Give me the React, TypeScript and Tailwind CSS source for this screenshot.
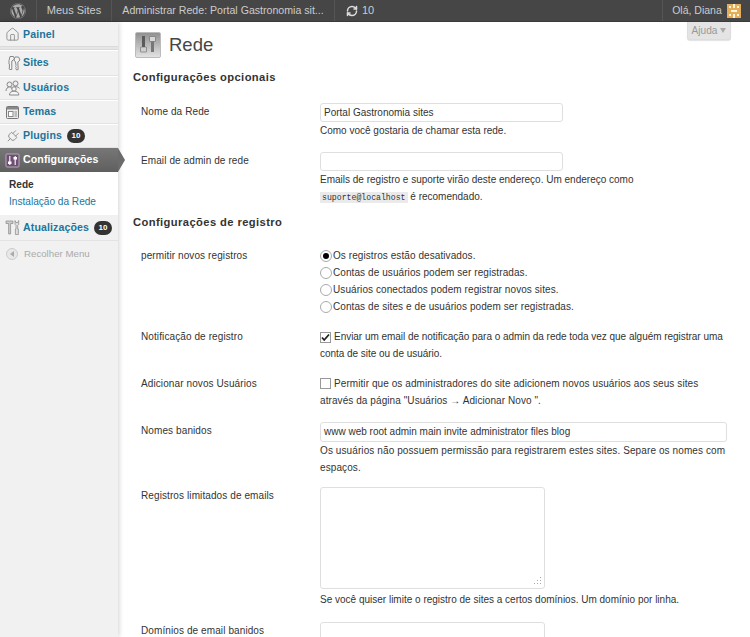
import type { ReactNode } from 'react'
import { FaWordpress } from 'react-icons/fa'
import { Home, Plug, RefreshCw } from 'lucide-react'

function KeysIcon() {
  return (
    <svg width="16" height="16" viewBox="0 0 16 16" fill="none" stroke="#888" strokeWidth="1">
      <path d="M5 1.500h3.500l1 2.500L6.800 6v8.500H4.600L4 13l.8-1L4 11l.8-1-.8-1V5.500z" fill="#f4f4f4" />
      <path d="M10 2h3.500l1.500 3-2.200 2 .4 7.500-1.600.5-.8-1.500.5-1-.7-1 .5-1-.6-3.500L9 5z" fill="#f4f4f4" />
    </svg>
  )
}

function UsersIcon() {
  return (
    <svg width="16" height="16" viewBox="0 0 16 16" fill="#eee" stroke="#888" strokeWidth="1">
      <circle cx="4.500" cy="4.500" r="2.500" />
      <circle cx="10.500" cy="3.500" r="2.500" />
      <path d="M1 11c0-2.500 1.500-4 3.500-4S7 8 7 9" />
      <path d="M8 7.500c1-1 5-1.500 6.500 1" fill="none" />
      <circle cx="9" cy="9" r="2.200" fill="#f6f6f6" />
      <path d="M4.500 15c0-2.500 1.500-3.800 4.500-3.800s4.800 1.300 4.800 3.800z" fill="#f6f6f6" />
    </svg>
  )
}

function ThemesIcon() {
  return (
    <svg width="15" height="15" viewBox="0 0 15 15" fill="none">
      <rect x="1.500" y="1.500" width="12" height="12" rx="1" fill="#ececec" stroke="#777" />
      <rect x="2" y="2" width="11" height="2.500" fill="#888" />
      <rect x="3.500" y="6.500" width="4.500" height="5" fill="#fff" stroke="#888" />
      <rect x="9.500" y="6" width="2.500" height="6" fill="#bbb" />
    </svg>
  )
}

function SettingsIcon() {
  return (
    <svg width="15" height="15" viewBox="0 0 15 15">
      <rect x="1" y="1" width="13" height="13" rx="1" fill="#6d4f72" stroke="#b9a8bc" />
      <rect x="4" y="3" width="1.500" height="9" fill="#d9d0da" />
      <rect x="9.500" y="3" width="1.500" height="9" fill="#d9d0da" />
      <rect x="3" y="8.500" width="3.500" height="2.500" fill="#fff" />
      <rect x="8.500" y="4" width="3.500" height="2.500" fill="#fff" />
    </svg>
  )
}

function ToolsIcon() {
  return (
    <svg width="16" height="17" viewBox="0 0 16 17" fill="none">
      <path d="M1 2h7v2.500H5.600V15H3.600V4.500H1z" fill="#ccc" stroke="#888" strokeWidth="0.700" />
      <path d="M10 1.500v4l1 1V10h-.6v5.500h3V10h-.7V6.500l1-1v-4l-.8 2h-2z" fill="#ddd" stroke="#888" strokeWidth="0.700" />
    </svg>
  )
}

function PageIcon() {
  return (
    <svg width="26" height="26" viewBox="0 0 26 26">
      <defs>
        <linearGradient id="pageBox" x1="0" y1="0" x2="0" y2="1">
          <stop offset="0" stopColor="#8f8f8f" />
          <stop offset="1" stopColor="#e4e4e4" />
        </linearGradient>
      </defs>
      <rect x="0.500" y="0.500" width="25" height="25" rx="1.500" fill="url(#pageBox)" stroke="#bbb" />
      <rect x="7" y="4" width="3" height="16" fill="#5a5a5a" />
      <rect x="16" y="5" width="3" height="15" fill="#777" />
      <rect x="5.500" y="15" width="6" height="5" rx="0.500" fill="#cfcfcf" stroke="#666" strokeWidth="0.600" />
      <rect x="14.500" y="4.500" width="6" height="5" rx="0.500" fill="#d8d8d8" stroke="#666" strokeWidth="0.600" />
    </svg>
  )
}

function Avatar() {
  return (
    <svg width="14" height="14" viewBox="0 0 7 7" shapeRendering="crispEdges">
      <rect width="7" height="7" fill="#e3ad5c" />
      <path d="M1 1h1v1H1zM3 0h1v2H3zM5 1h1v1H5zM2 3h3v1H2zM1 5h1v1H1zM3 5h1v2H3zM5 5h1v1H5z" fill="#fff3d8" />
    </svg>
  )
}

function Badge() {
  return (
    <span className="ml-[5px] inline-flex h-[14px] w-[18px] items-center justify-center rounded-full bg-[#333] font-bold text-[8px] text-white">
      10
    </span>
  )
}

function MenuItem({ icon, label, badge, h = 'h-[24px]' }: { icon: ReactNode; label: string; badge?: boolean; h?: string }) {
  return (
    <div className={`flex items-center border-b border-b-[#e3e3e3] border-t border-t-white pl-[5px] ${h}`}>
      <span className="flex w-[18px] justify-start">{icon}</span>
      <span className="font-bold text-[10.600px] tracking-[0.100px] text-[#21759b]">{label}</span>
      {badge && <Badge />}
    </div>
  )
}

function Sidebar() {
  return (
    <aside className="relative z-10 w-[118px] shrink-0 bg-[#f1f1f1] shadow-[1px_0_5px_rgba(0,0,0,0.18)]">
      <div className="flex h-[24px] items-center pl-[5px] pt-[1px]">
        <span className="flex w-[18px] justify-start"><Home className="h-[15px] w-[15px] text-[#888]" strokeWidth={1.400} /></span>
        <span className="font-bold text-[10.600px] tracking-[0.100px] text-[#21759b]">Painel</span>
      </div>
      <div className="h-[4px] border-y border-[#dadada] bg-[#e6e6e6]" />
      <MenuItem icon={<KeysIcon />} label="Sites" h="h-[26px] pb-[1px]" />
      <MenuItem icon={<UsersIcon />} label="Usuários" />
      <MenuItem icon={<ThemesIcon />} label="Temas" />
      <MenuItem icon={<Plug className="h-[15px] w-[15px] rotate-45 text-[#888]" strokeWidth={1.400} />} label="Plugins" badge />
      <div className="relative flex h-[24px] items-center bg-gradient-to-b from-[#777] to-[#5f5f5f] pl-[5px]">
        <span className="flex w-[18px] justify-start"><SettingsIcon /></span>
        <span className="font-bold text-[10.600px] tracking-[0.100px] text-white">Configurações</span>
        <span className="absolute left-[118px] top-0 h-0 w-0 border-y-[12px] border-l-[7px] border-y-transparent border-l-[#6b6b6b]" />
      </div>
      <div className="flex h-[42px] flex-col justify-center gap-[3px] bg-white pl-[9px] text-[10.100px]">
        <span className="font-bold leading-[14px] text-[#333]">Rede</span>
        <span className="leading-[14px] text-[#21759b]">Instalação da Rede</span>
      </div>
      <MenuItem icon={<ToolsIcon />} label="Atualizações" badge h="h-[27px]" />
      <div className="mt-[1px] flex h-[24px] items-center pl-[6px] text-[9.700px] text-[#aaa]">
        <span className="flex h-[12px] w-[12px] items-center justify-center rounded-full border border-[#ccc] bg-[#e8e8e8]">
          <span className="h-0 w-0 border-y-[3px] border-r-[4px] border-y-transparent border-r-[#aaa]" />
        </span>
        <span className="ml-[6px]">Recolher Menu</span>
      </div>
    </aside>
  )
}

function TopBar() {
  return (
    <header className="flex h-[22px] shrink-0 items-center whitespace-nowrap border-b border-b-[#3a3a3a] bg-[#464646] text-[11px] text-[#ccc]">
      <div className="flex h-full w-[37px] items-center justify-center border-r border-r-[#555]">
        <FaWordpress className="h-[16px] w-[16px] text-[#aaa]" />
      </div>
      <div className="flex h-full w-[75px] items-center justify-center border-r border-r-[#555]">Meus Sites</div>
      <div className="flex h-full w-[223px] items-center justify-center border-r border-r-[#555] text-[10.600px]">Administrar Rede: Portal Gastronomia sit...</div>
      <div className="ml-[11px] flex h-full items-center gap-[4px]">
        <RefreshCw className="h-[12px] w-[12px] text-[#ddd]" strokeWidth={3} />
        10
      </div>
      <div className="ml-auto flex h-full w-[88px] items-center justify-center gap-[5px] border-l border-l-[#555] text-[10.500px]">
        Olá, Diana
        <Avatar />
      </div>
    </header>
  )
}

function Row({ label, children, className = '' }: { label: string; children: ReactNode; className?: string }) {
  return (
    <div className={`flex ${className}`}>
      <div className="w-[187px] shrink-0 pl-[8px] text-[10px] leading-[17px] tracking-[0.100px]">{label}</div>
      <div className="min-w-0 flex-1 leading-[17px]">{children}</div>
    </div>
  )
}

function TextBox({ value, w, h = 'h-[19px]' }: { value?: string; w: string; h?: string }) {
  return (
    <div className={`${w} ${h} rounded-[3px] border border-[#dfdfdf] bg-white pl-[3px] text-[10px] leading-[17px] text-[#333]`}>
      {value}
    </div>
  )
}

function Radio({ checked, label }: { checked?: boolean; label: string }) {
  return (
    <div className="flex h-[17px] items-center tracking-[0.080px]">
      <span className="flex h-[12px] w-[12px] items-center justify-center rounded-full border border-[#aaa] bg-white">
        {checked && <span className="h-[6px] w-[6px] rounded-full bg-black" />}
      </span>
      <span className="ml-[1px]">{label}</span>
    </div>
  )
}

function CheckBox({ checked }: { checked?: boolean }) {
  return (
    <span className="mr-[3px] inline-flex h-[11px] w-[11px] translate-y-[2px] items-center justify-center border border-[#999] bg-white">
      {checked && (
        <svg width="9" height="9" viewBox="0 0 9 9" fill="none">
          <path d="M1 4.500l2.200 2.500L8 1.500" stroke="#222" strokeWidth="1.800" />
        </svg>
      )}
    </span>
  )
}

function Heading({ children, className = '' }: { children: ReactNode; className?: string }) {
  return <h3 className={`font-bold text-[11.200px] leading-[16px] tracking-[0.400px] text-[#333] ${className}`}>{children}</h3>
}

function Content() {
  return (
    <main className="relative min-w-0 flex-1 pl-[15px] pr-[19px] text-[10px] text-[#333]">
      <div className="absolute right-[19px] top-0 flex h-[18px] w-[44px] items-center justify-center gap-[3px] rounded-b-[3px] border border-t-0 border-[#ddd] bg-[#e4e4e4] text-[10.100px] text-[#999] shadow-[0_1px_1px_rgba(0,0,0,0.12)]">
        Ajuda
        <span className="h-0 w-0 border-x-[3px] border-t-[5px] border-x-transparent border-t-[#aaa]" />
      </div>
      <div className="flex items-center gap-[8px] pl-[2px] pt-[10px]">
        <PageIcon />
        <h2 className="text-[18.500px] leading-[26px] text-[#464646]">Rede</h2>
      </div>
      <Heading className="mt-[11px]">Configurações opcionais</Heading>
      <Row label="Nome da Rede" className="mt-[18px]">
        <TextBox value="Portal Gastronomia sites" w="w-[243px]" />
        <p>Como você gostaria de chamar esta rede.</p>
      </Row>
      <Row label="Email de admin de rede" className="mt-[13px]">
        <TextBox w="w-[243px]" />
        <p>Emails de registro e suporte virão deste endereço. Um endereço como</p>
        <p className="h-[17px]">
          <code className="bg-[#eaeaea] px-[2px] py-[1px] font-['Liberation_Mono',monospace] text-[8.200px] leading-none">suporte@localhost</code> é recomendado.
        </p>
      </Row>
      <Heading className="mt-[9px]">Configurações de registro</Heading>
      <Row label="permitir novos registros" className="mt-[17px]">
        <Radio checked label="Os registros estão desativados." />
        <Radio label="Contas de usuários podem ser registradas." />
        <Radio label="Usuários conectados podem registrar novos sites." />
        <Radio label="Contas de sites e de usuários podem ser registradas." />
      </Row>
      <Row label="Notificação de registro" className="mt-[13px]">
        <span className="tracking-[-0.030px]">
          <CheckBox checked />
          Enviar um email de notificação para o admin da rede toda vez que alguém registrar uma conta de site ou de usuário.
        </span>
      </Row>
      <Row label="Adicionar novos Usuários" className="mt-[13px]">
        <span className="tracking-[0.080px]">
          <CheckBox />
          Permitir que os administradores do site adicionem novos usuários aos seus sites através da página "Usuários → Adicionar Novo ".
        </span>
      </Row>
      <Row label="Nomes banidos" className="mt-[13px]">
        <TextBox value="www web root admin main invite administrator files blog" w="w-[407px]" h="h-[20px]" />
        <p className="tracking-[0.100px]">Os usuários não possuem permissão para registrarem estes sites. Separe os nomes com espaços.</p>
      </Row>
      <Row label="Registros limitados de emails" className="mt-[11px]">
        <div className="relative h-[102px] w-[225px] rounded-[3px] border border-[#dfdfdf] bg-white">
          <svg className="absolute bottom-[2px] right-[2px]" width="10" height="10" viewBox="0 0 10 10" fill="#aaa" shapeRendering="crispEdges">
            <path d="M8 1h1v1H8zM5 4h1v1H5zM8 4h1v1H8zM2 7h1v1H2zM5 7h1v1H5zM8 7h1v1H8z" />
          </svg>
        </div>
        <p className="mt-[2px]">Se você quiser limite o registro de sites a certos domínios. Um domínio por linha.</p>
      </Row>
      <Row label="Domínios de email banidos" className="mt-[14px]">
        <div className="h-[60px] w-[225px] rounded-[3px] border border-[#dfdfdf] bg-white" />
      </Row>
    </main>
  )
}

export default function App() {
  return (
    <div className="flex h-[637px] w-[750px] flex-col overflow-hidden bg-white font-['Liberation_Sans',Arial,sans-serif]">
      <TopBar />
      <div className="flex min-h-0 flex-1">
        <Sidebar />
        <Content />
      </div>
    </div>
  )
}
